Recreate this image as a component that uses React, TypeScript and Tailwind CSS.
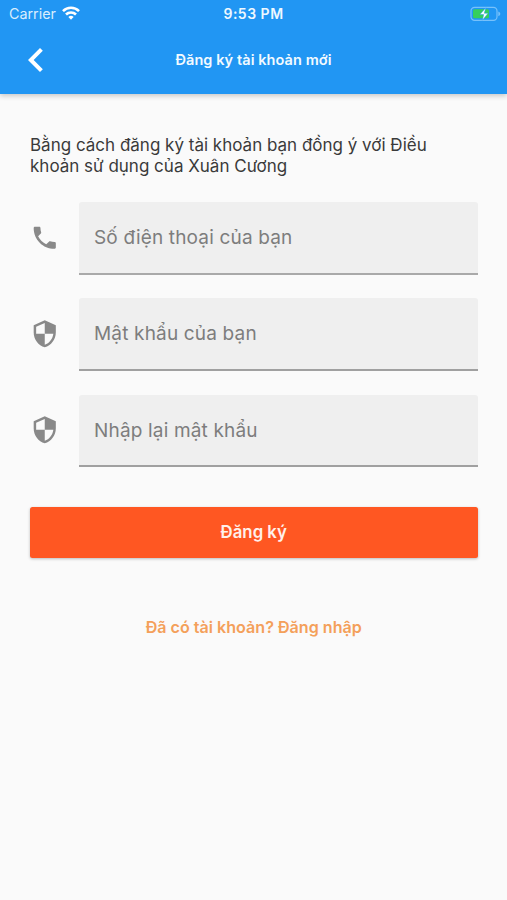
import type { ReactNode } from "react";

const CALL =
  "M6.62 10.79c1.44 2.83 3.76 5.14 6.59 6.59l2.2-2.2c.27-.27.67-.36 1.02-.24 1.12.37 2.33.57 3.57.57.55 0 1 .45 1 1V20c0 .55-.45 1-1 1-9.39 0-17-7.61-17-17 0-.55.45-1 1-1h3.5c.55 0 1 .45 1 1 0 1.25.2 2.45.57 3.57.11.35.03.74-.25 1.02l-2.2 2.2z";
const SHIELD =
  "M12 1L3 5v6c0 5.55 3.84 10.74 9 12 5.16-1.26 9-6.45 9-12V5l-9-4zm0 10.99h7c-.53 4.12-3.28 7.79-7 8.94V12H5V6.3l7-3.11v8.8z";

function Icon({ path, className }: { path: string; className: string }) {
  return (
    <svg viewBox="0 0 24 24" fill="currentColor" className={className} aria-hidden="true">
      <path d={path} />
    </svg>
  );
}

function Field({ icon, line, children }: { icon: string; line: string; children: ReactNode }) {
  return (
    <label className="flex items-center">
      <Icon path={icon} className="mr-[19.5px] mb-[1.5px] size-[29.5px] shrink-0 text-[#898989]" />
      <span
        className={`flex h-[72.5px] flex-1 items-center rounded-t-[3px] bg-[#efefef] pt-[2px] pl-[15px] text-[19px] tracking-[0.17px] text-[#7d7d7d] ${line}`}
      >
        {children}
      </span>
    </label>
  );
}

function StatusBar() {
  return (
    <div className="grid h-[27px] grid-cols-3 items-center text-[14px] leading-none">
      <div className="flex items-center gap-[6px] pl-[9px] text-[#d9edfd]">
        <span className="pt-px text-[14.3px]">Carrier</span>
        <svg viewBox="0 0 18 14" className="h-[14px] w-[18px]" fill="none" stroke="#fff" strokeWidth="2.6">
          <path d="M1 5.1a11.4 11.4 0 0 1 16 0" />
          <path d="M4 8.5a7.1 7.1 0 0 1 10 0" />
          <path d="M9 13.7 6.4 11.1a3.7 3.7 0 0 1 5.2 0z" fill="#fff" stroke="none" />
        </svg>
      </div>
      <span className="text-center font-semibold tracking-[0.5px] text-[#eef8ff]">9:53 PM</span>
      <svg viewBox="0 0 31 16" className="mr-[6px] h-[16px] w-[31px] justify-self-end">
        <rect x="1" y="1.3" width="26" height="13" rx="3.6" fill="none" stroke="#77c1fb" strokeWidth="1.2" />
        <rect x="3" y="3.3" width="16" height="9" rx="1.5" fill="#35cf5c" />
        <path d="M28.3 5.4v4.8c1.3-.5 2-1.4 2-2.4s-.7-1.9-2-2.4z" fill="#77c1fb" />
        <path d="M15.8 1.8 9.9 8.6h3.8l-1.3 5.6 5.7-6.9h-3.8z" fill="#fff" stroke="#2196f3" strokeWidth="0.5" />
      </svg>
    </div>
  );
}

export default function App() {
  return (
    <div className="flex h-[900px] w-[507px] flex-col bg-[#fafafa] font-['Inter',sans-serif]">
      <header className="h-[94px] bg-[#2196f3] text-white shadow-[0_2px_5px_rgba(0,0,0,0.2)]">
        <StatusBar />
        <div className="grid h-[65px] grid-cols-[60px_1fr_60px] items-center">
          <button type="button" aria-label="Back" className="pl-3">
            <Icon path="M15.41 7.41L14 6l-6 6 6 6 1.41-1.41L10.83 12z" className="size-12" />
          </button>
          <h1 className="text-center text-[14.5px] font-semibold tracking-[0.08px] text-[#f2faff]">
            Đăng ký tài khoản mới
          </h1>
        </div>
      </header>
      <main className="flex flex-col pt-[41px] pr-[29.5px] pl-[30px]">
        <p className="text-[17px] leading-[21px] whitespace-nowrap text-[#3a3a3a]">
          Bằng cách đăng ký tài khoản bạn đồng ý với Điều
          <br />
          khoản sử dụng của Xuân Cương
        </p>
        <form className="mt-[25px] flex flex-col gap-[23.75px]">
          <Field icon={CALL} line="border-b-2 border-[#a9a9a9]">Số điện thoại của bạn</Field>
          <Field icon={SHIELD} line="border-b-2 border-[#a0a0a0]">Mật khẩu của bạn</Field>
          <Field icon={SHIELD} line="border-b-2 border-[#a0a0a0]">Nhập lại mật khẩu</Field>
        </form>
        <button
          type="button"
          className="mt-[40px] h-[50.5px] rounded-[2.5px] bg-[#ff5722] text-[16.8px] font-semibold text-[#fff0eb] shadow-[0_1px_3px_rgba(0,0,0,0.25)]"
        >
          Đăng ký
        </button>
        <a className="mt-[59px] text-center text-[16.1px] leading-[20px] font-semibold text-[#f4a05a]">
          Đã có tài khoản? Đăng nhập
        </a>
      </main>
    </div>
  );
}
